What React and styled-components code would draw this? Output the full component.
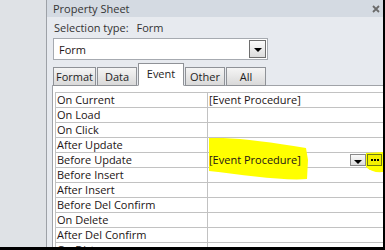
import styled, { createGlobalStyle } from "styled-components";

const Global = createGlobalStyle`
  body {
    margin: 0;
    font-family: "Open Sans", "Noto Sans", sans-serif;
  }
`;

const Frame = styled.div`
  width: 385px;
  height: 250px;
  box-sizing: border-box;
  display: flex;
  overflow: hidden;
  background: #dfe2e6;
  border-right: 2px solid #000;
  border-bottom: 3px solid #000;
`;

const Gutter = styled.div`
  width: 46px;
  flex: none;
  background: #dfe2e6;
  border-right: 1px solid #9da1a7;
`;

const Sheet = styled.div`
  flex: 1;
  min-width: 0;
  display: flex;
  flex-direction: column;
  background: #e7eaef;
  font-size: 11px;
  color: #2b2b2b;
`;

const TitleBar = styled.div`
  height: 17px;
  flex: none;
  display: flex;
  align-items: center;
  justify-content: space-between;
  padding: 0 3px 0 6px;
  background: #d4dae2;
  font-size: 11px;
  color: #353535;
`;

const SelectionRow = styled.div`
  height: 20px;
  flex: none;
  display: flex;
  align-items: center;
  gap: 8px;
  padding-left: 7px;
  color: #333;
`;

const Combo = styled.div`
  margin: 1px 0 0 6px;
  width: 215px;
  height: 22px;
  flex: none;
  box-sizing: border-box;
  display: flex;
  align-items: center;
  justify-content: space-between;
  padding: 0 1px 0 5px;
  background: #fff;
  border: 1px solid #a6aab0;
  color: #1e1414;
`;

const ArrowButton = styled.div`
  width: ${({ $w }) => $w}px;
  height: ${({ $h }) => $h}px;
  box-sizing: border-box;
  display: flex;
  align-items: center;
  justify-content: center;
  border: 1px solid ${({ $border }) => $border};
  background: linear-gradient(#fbfbfb, #dcdcdc);
`;

const Triangle = styled.span`
  width: 0;
  height: 0;
  border-left: 4px solid transparent;
  border-right: 4px solid transparent;
  border-top: 4px solid #000;
  margin-top: ${({ $down }) => $down || 0}px;
`;

const TabStrip = styled.div`
  display: flex;
  align-items: flex-end;
  gap: 1px;
  height: 22px;
  flex: none;
  margin-top: 3px;
  padding-left: 6px;
  position: relative;
  z-index: 1;
`;

const Tab = styled.div`
  width: ${({ $w }) => $w}px;
  height: ${({ $active }) => ($active ? 23 : 19)}px;
  margin-bottom: -1px;
  box-sizing: border-box;
  display: flex;
  align-items: center;
  justify-content: center;
  padding-bottom: ${({ $active }) => ($active ? 2 : 0)}px;
  border: 1px solid #8f9297;
  border-bottom-color: ${({ $active }) => ($active ? "#fff" : "#8f9297")};
  background: ${({ $active }) =>
    $active ? "#fff" : "linear-gradient(#f5f5f5, #d9d9d9)"};
  color: #1e1e1e;
`;

const Content = styled.div`
  flex: 1;
  margin-left: 5px;
  padding: 6px 0 0 2px;
  background: #fff;
  border-left: 1px solid #a0a3a8;
  border-top: 1px solid #a0a3a8;
`;

const Grid = styled.div`
  position: relative;
  border-top: 1px solid #c2c2c2;
  border-left: 1px solid #c2c2c2;
`;

const Row = styled.div`
  display: flex;
  height: 15px;
  box-sizing: border-box;
  border-bottom: 1px solid #c2c2c2;
`;

const Label = styled.div`
  width: 152px;
  flex: none;
  box-sizing: border-box;
  padding-left: 1px;
  border-right: 1px solid #c2c2c2;
  display: flex;
  align-items: center;
  color: #1c1414;
`;

const Value = styled.div`
  flex: 1;
  display: flex;
  align-items: center;
  justify-content: space-between;
  padding-left: 1px;
  color: #1c1414;
`;

const Text = styled.span`
  position: relative;
  z-index: 2;
  white-space: nowrap;
  line-height: 14px;
`;

const RowButtons = styled.div`
  position: relative;
  z-index: 2;
  display: flex;
  align-items: center;
  gap: 1px;
  margin-right: 1px;
`;

const Ellipsis = styled.div`
  width: 15px;
  height: 12px;
  box-sizing: border-box;
  display: flex;
  align-items: center;
  justify-content: center;
  gap: 1px;
  border: 1px solid #6f7a10;
  background: #f4f000;
`;

const Dot = styled.span`
  width: 2px;
  height: 2px;
  background: #000;
`;

const Highlight = styled.svg`
  position: absolute;
  left: ${({ $x }) => $x}px;
  top: ${({ $y }) => $y}px;
  z-index: 1;
  pointer-events: none;
`;

const rows = [
  ["On Current", "[Event Procedure]"],
  ["On Load", ""],
  ["On Click", ""],
  ["After Update", ""],
  ["Before Update", "[Event Procedure]", true],
  ["Before Insert", ""],
  ["After Insert", ""],
  ["Before Del Confirm", ""],
  ["On Delete", ""],
  ["After Del Confirm", ""],
  ["On Dirty", ""],
];

const tabs = [
  ["Format", 43],
  ["Data", 40],
  ["Event", 46, true],
  ["Other", 40],
  ["All", 40],
];

export default function App() {
  return (
    <>
      <Global />
      <Frame>
        <Gutter />
        <Sheet>
          <TitleBar>
            <span>Property Sheet</span>
            <svg width="8" height="8" viewBox="0 0 8 8">
              <path d="M1 1 L7 7 M7 1 L1 7" stroke="#6b6b6b" strokeWidth="1.8" />
            </svg>
          </TitleBar>
          <SelectionRow>
            <span>Selection type:</span>
            <span>Form</span>
          </SelectionRow>
          <Combo>
            <span>Form</span>
            <ArrowButton $w={17} $h={18} $border="#6e6e6e">
              <Triangle $down={1} />
            </ArrowButton>
          </Combo>
          <TabStrip>
            {tabs.map(([name, w, active]) => (
              <Tab key={name} $w={w} $active={active}>
                {name}
              </Tab>
            ))}
          </TabStrip>
          <Content>
            <Grid>
              <Highlight $x={153} $y={45} width="100" height="44" viewBox="0 0 100 44">
                <path
                  d="M0 0 C20 -1 55 3 97 10 L99 22 L98 41 C75 43 35 37 0 33 Z"
                  fill="#ffff00"
                />
              </Highlight>
              <Highlight $x={310} $y={59} width="18" height="22" viewBox="0 0 18 22">
                <path d="M0 1 L18 0 L18 20 C10 21 4 19 0 15 Z" fill="#ffff00" />
              </Highlight>
              {rows.map(([label, value, active]) => (
                <Row key={label}>
                  <Label>
                    <Text>{label}</Text>
                  </Label>
                  <Value>
                    <Text>{value}</Text>
                    {active && (
                      <RowButtons>
                        <ArrowButton $w={16} $h={12} $border="#8a8a8a">
                          <Triangle $down={3} />
                        </ArrowButton>
                        <Ellipsis>
                          <Dot />
                          <Dot />
                          <Dot />
                        </Ellipsis>
                      </RowButtons>
                    )}
                  </Value>
                </Row>
              ))}
            </Grid>
          </Content>
        </Sheet>
      </Frame>
    </>
  );
}
